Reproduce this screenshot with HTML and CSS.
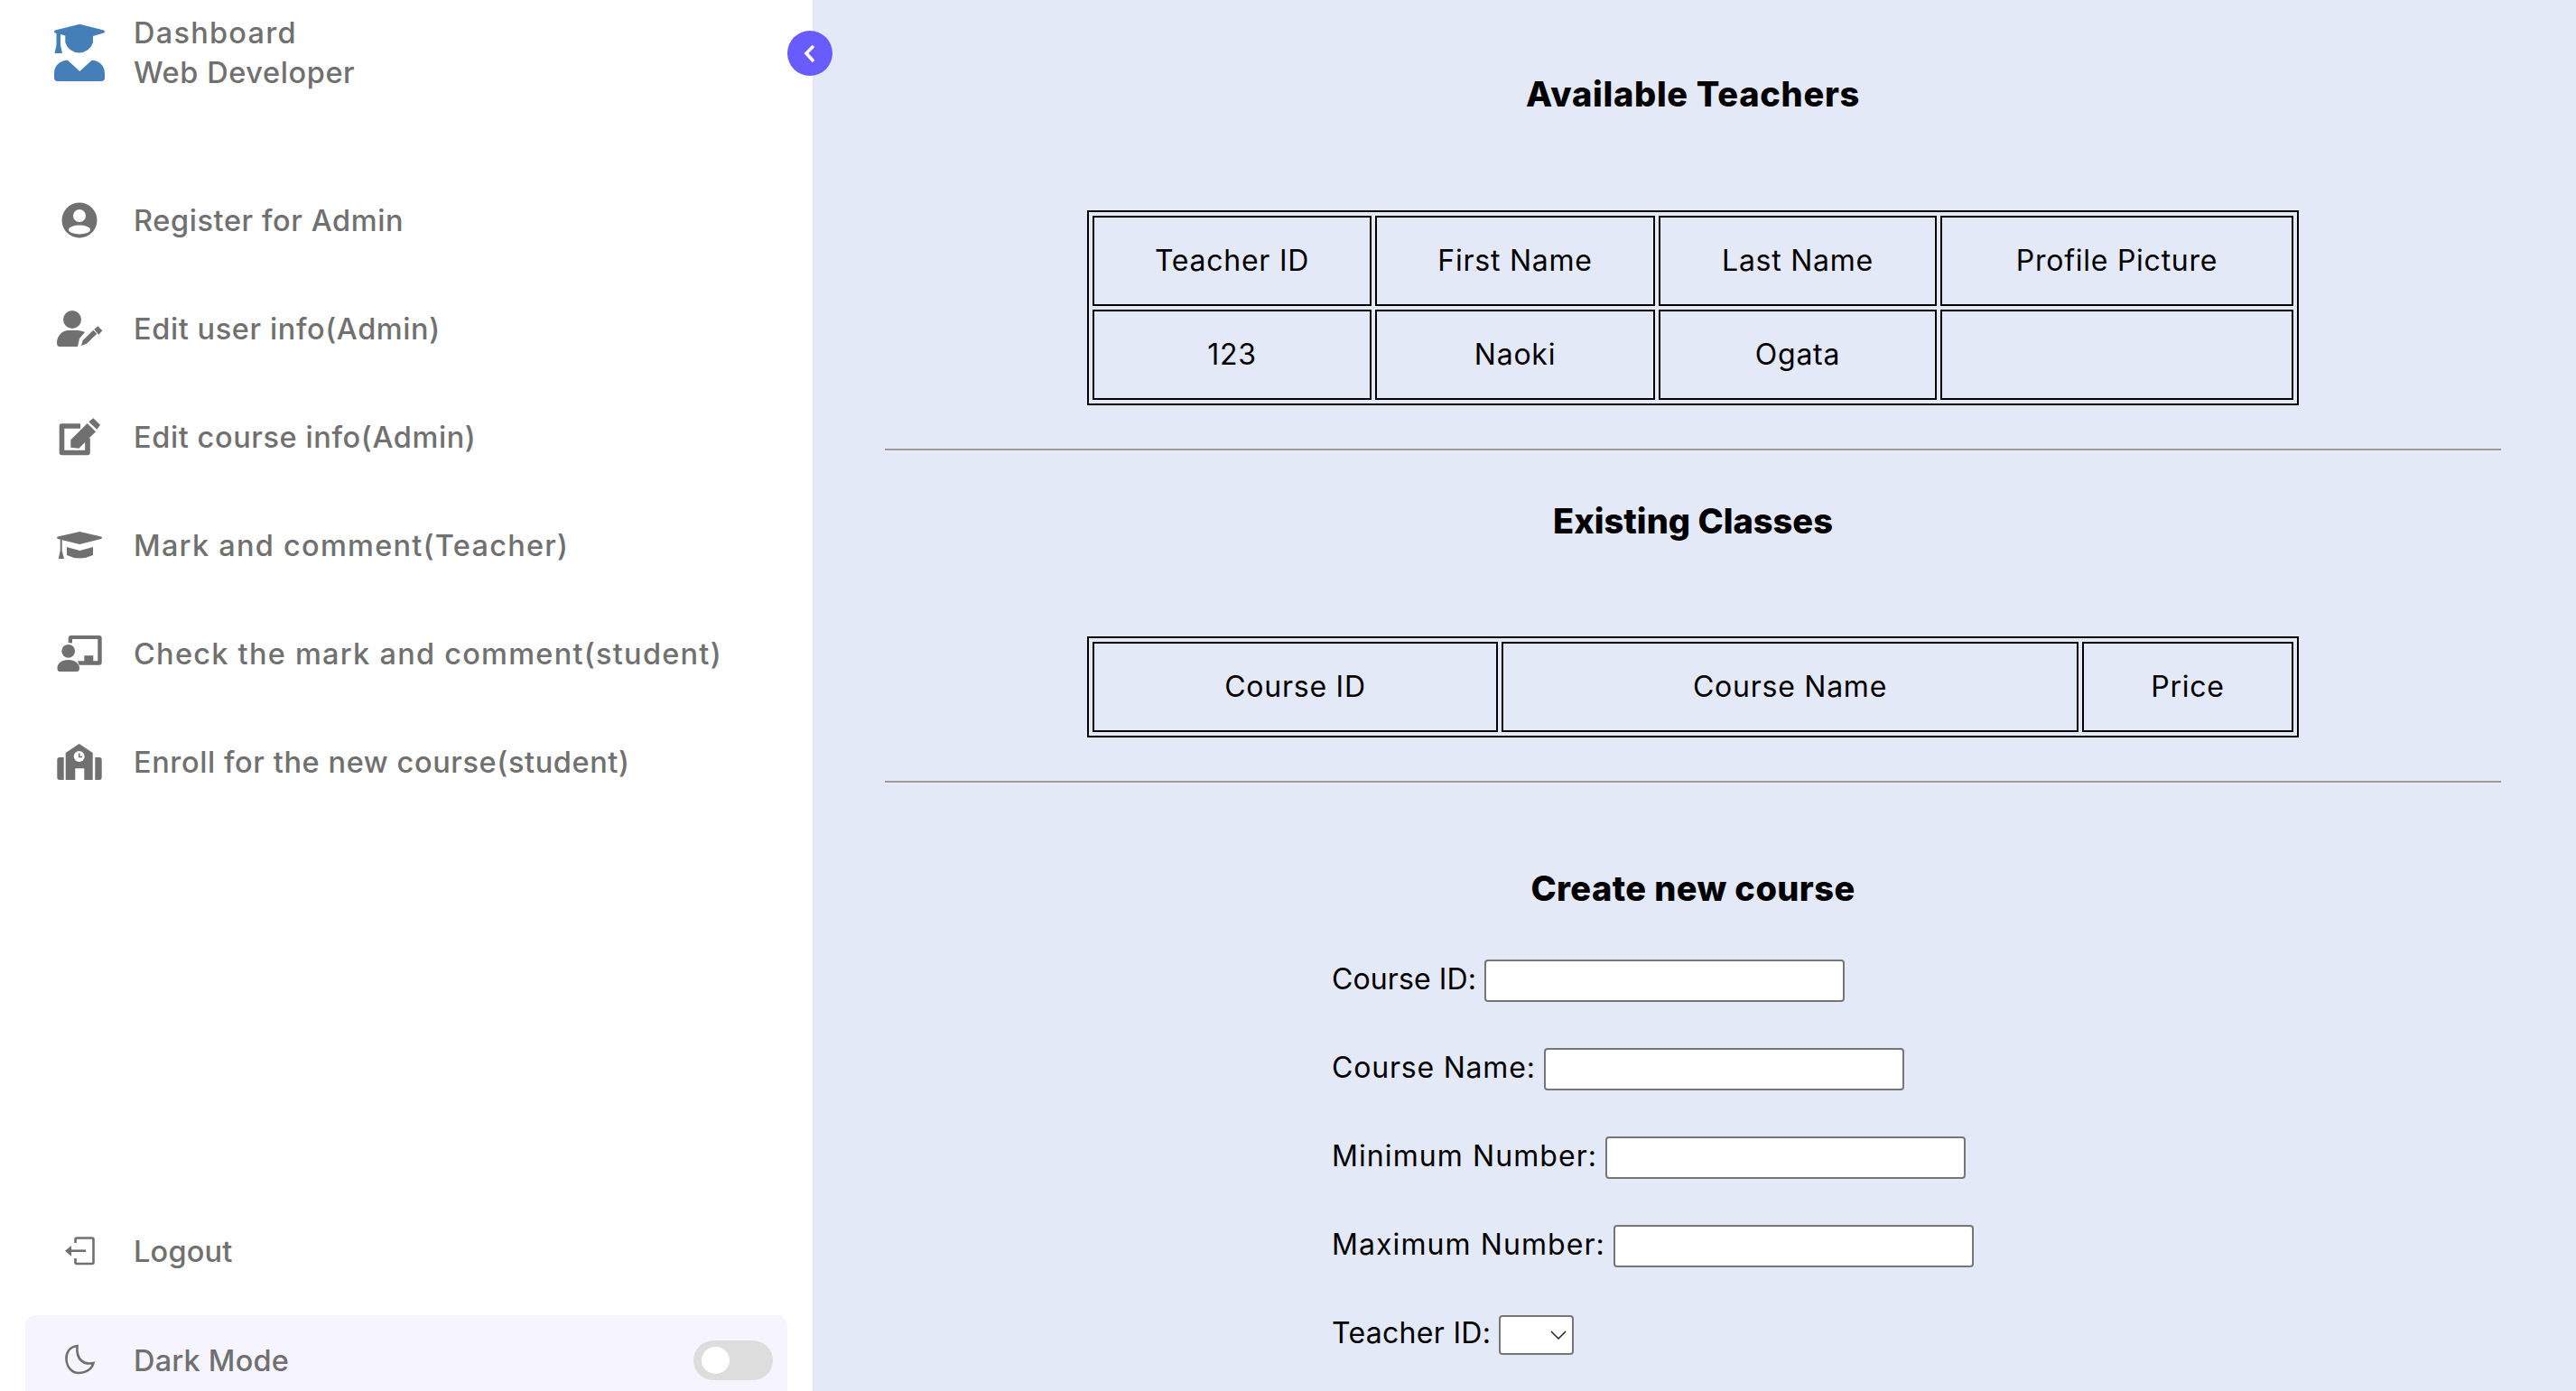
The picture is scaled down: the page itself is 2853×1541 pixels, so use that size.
FILE: index.html
```html
<!DOCTYPE html>
<html lang="en">
<head>
    <meta charset="UTF-8">
    <meta name="viewport" content="width=device-width, initial-scale=1.0">
    <title>Dashboard</title>
    <link rel="stylesheet" href="styles.css">
</head>
<body>
    <nav class="sidebar">
        <header class="sidebar-head">
            <svg class="logo" viewBox="0 0 64 64">
                <path d="M32.3 -.3 L59 6.5 Q61 8 59 9.5 L47 13 V20 A16 16 0 0 1 16.3 20 V12.5 L11 11 V23 L13 32 H4.5 L6.5 23 V10 L5 9.5 Q3 8 5 6.5 Z"/>
                <path d="M4 54 C4 46 10 40 19 39.7 L32.3 52 L45.7 39.7 C54 40 60 46 60 54 V59 Q60 63 56 63 H8 Q4 63 4 59 Z"/>
            </svg>
            <div class="head-text">
                <span class="wide">Dashboard</span>
                <span>Web Developer</span>
            </div>
        </header>

        <button class="toggle" type="button" aria-label="Collapse sidebar">
            <svg viewBox="0 0 50 50"><path d="M29 17 L21 25 L29 34"/></svg>
        </button>

        <ul class="menu-links">
            <li>
                <svg class="icon" viewBox="0 0 64 64">
                    <circle cx="32" cy="32" r="19.5"/>
                    <circle class="cut" cx="32" cy="27" r="7"/>
                    <ellipse class="cut" cx="32" cy="42.5" rx="12" ry="5"/>
                </svg>
                <a href="#">Register for Admin</a>
            </li>
            <li>
                <svg class="icon" viewBox="0 0 64 64">
                    <circle cx="24" cy="22" r="10"/>
                    <path d="M7 48 C7 40 13 34 20 34 H30 C33 34 36 35 38 36 L32 43 L30 52 H10 Q7 52 7 48 Z"/>
                    <path d="M34 51 L35.7 45.3 L47.3 33.7 L51.3 37.7 L40 48.7 Z"/>
                    <path d="M48.3 33 L52.3 29.3 L57.3 34.3 L53.3 38.7 Z"/>
                </svg>
                <a href="#">Edit user info(Admin)</a>
            </li>
            <li>
                <svg class="icon" viewBox="0 0 64 64">
                    <path class="line" d="M33 20 H12.5 V49.5 H41 V33.5"/>
                    <path d="M22.3 43.7 V35.3 L40.7 17 L50 26.3 L31.3 44.7 Z"/>
                    <path d="M42.3 15.3 L47.3 11.3 L55 18.7 L51.3 23.7 Z"/>
                </svg>
                <a href="#">Edit course info(Admin)</a>
            </li>
            <li>
                <svg class="icon" viewBox="0 0 64 64">
                    <path d="M32.3 17 L56 22.5 Q58 23.7 56 25 L32.3 31 L8 25 Q6 23.7 8 22.5 Z"/>
                    <path d="M18 34 L32.3 38 L47 34 V43 Q32 50 18 43 Z"/>
                    <path d="M10.7 26 H12.7 V38 L15 47 H8.7 L10.7 38 Z"/>
                </svg>
                <a class="wide" href="#">Mark and comment(Teacher)</a>
            </li>
            <li>
                <svg class="icon" viewBox="0 0 64 64">
                    <circle cx="19.7" cy="29.3" r="7.4"/>
                    <path d="M7.5 48 C7.5 43 12 39 19.5 39 C27 39 32 43 32 48 Q32 52 29 52 H10 Q7.5 52 7.5 48 Z"/>
                    <path d="M19.7 20 V15 Q19.7 12 22.7 12 H53.7 Q56.7 12 56.7 15 V41.7 Q56.7 44.7 53.7 44.7 H31.7 L30 40.3 H37.3 V34.3 H47.3 V40.3 H52.3 V16 H24 V20.5 Z"/>
                </svg>
                <a class="wide" href="#">Check the mark and comment(student)</a>
            </li>
            <li>
                <svg class="icon" viewBox="0 0 64 64">
                    <path d="M31.7 12 L46.7 22 V52 H37.3 V39.3 H27.3 V52 H16.7 V22 Z"/>
                    <path d="M7.3 30 Q7.3 27 10 27 H14.7 V52 H10 Q7.3 52 7.3 49 Z"/>
                    <path d="M49.3 27 H54 Q56.7 27 56.7 30 V49 Q56.7 52 54 52 H49.3 Z"/>
                    <circle class="cut" cx="31.7" cy="26" r="6"/>
                    <path class="hands" d="M31.7 22.5 V26.5 H35"/>
                </svg>
                <a href="#">Enroll for the new course(student)</a>
            </li>
        </ul>

        <div class="bottom-links">
            <div class="bottom-row">
                <svg class="icon outline" viewBox="0 0 64 64">
                    <path d="M27.5 23 V19 Q27.5 17.5 29 17.5 H46 Q47.5 17.5 47.5 19 V44.5 Q47.5 46 46 46 H29 Q27.5 46 27.5 44.5 V40"/>
                    <path d="M22 31.7 H39"/>
                    <path class="arrow" d="M16 31.7 L23 26 V37.7 Z"/>
                </svg>
                <a class="tight" href="#">Logout</a>
            </div>
            <div class="bottom-row mode">
                <svg class="icon outline" viewBox="0 0 64 64">
                    <path d="M29.5 16 C20 17 17 25 17.5 31 C18 40 24 46 31 46 C40 46 46 41 47.5 35 C38 37 28 33 29.5 16 Z"/>
                </svg>
                <span class="tight">Dark Mode</span>
                <span class="switch"></span>
            </div>
        </div>
    </nav>

    <main class="main">
        <h2 class="first">Available Teachers</h2>
        <table>
            <tr>
                <th class="col-1">Teacher ID</th>
                <th class="col-2">First Name</th>
                <th class="col-3">Last Name</th>
                <th class="col-4">Profile Picture</th>
            </tr>
            <tr>
                <td>123</td>
                <td>Naoki</td>
                <td>Ogata</td>
                <td></td>
            </tr>
        </table>
        <hr>

        <h2>Existing Classes</h2>
        <table>
            <tr>
                <th class="col-id">Course ID</th>
                <th class="col-name">Course Name</th>
                <th class="col-price">Price</th>
            </tr>
        </table>
        <hr>

        <h2 class="create">Create new course</h2>
        <form class="course-form">
            <div class="form-row">
                <label for="course-id">Course ID:</label>
                <input id="course-id" type="text">
            </div>
            <div class="form-row">
                <label class="mid" for="course-name">Course Name:</label>
                <input id="course-name" type="text">
            </div>
            <div class="form-row">
                <label class="wide" for="min-number">Minimum Number:</label>
                <input id="min-number" type="text">
            </div>
            <div class="form-row">
                <label class="wide" for="max-number">Maximum Number:</label>
                <input id="max-number" type="text">
            </div>
            <div class="form-row">
                <label class="short" for="teacher-id">Teacher ID:</label>
                <span class="select-wrap">
                    <select id="teacher-id"></select>
                    <svg class="chevron" viewBox="0 0 18 10"><path d="M1 1 L9 9 L17 1"/></svg>
                </span>
            </div>
        </form>
    </main>
</body>
</html>
```

FILE: styles.css
```css
* {
    box-sizing: border-box;
}

body {
    display: flex;
    height: 100vh;
    margin: 0;
    overflow: hidden;
    background: #e4e9f7;
    font-family: Inter, "Liberation Sans", sans-serif;
    color: #000;
}

/* sidebar */
.sidebar {
    position: relative;
    display: flex;
    flex-direction: column;
    flex: none;
    width: 900px;
    height: calc(100vh + 16px);
    padding: 14px 28px 0;
    background: #fff;
    color: #707070;
    font-size: 32.5px;
    font-weight: 500;
    letter-spacing: .6px;
}

.sidebar a {
    color: inherit;
    text-decoration: none;
}

.sidebar .wide {
    letter-spacing: 1.25px;
}

.sidebar .tight {
    letter-spacing: .2px;
}

.sidebar-head {
    display: flex;
    align-items: center;
    gap: 28px;
    padding-left: 28px;
}

.logo {
    width: 64px;
    height: 64px;
    overflow: visible;
    fill: #447fb8;
}

.head-text {
    display: flex;
    flex-direction: column;
    padding-top: 1px;
    line-height: 44px;
}

.toggle {
    position: absolute;
    top: 34px;
    right: -22px;
    width: 50px;
    height: 50px;
    padding: 0;
    border: 0;
    border-radius: 50%;
    background: #695cfe;
}

.toggle svg {
    display: block;
    fill: none;
    stroke: #fff;
    stroke-width: 3.6;
}

.menu-links {
    flex: 1;
    margin: 81px 0 0;
    padding: 0;
    list-style: none;
}

.menu-links li,
.bottom-row {
    display: flex;
    align-items: center;
    gap: 28px;
    height: 120px;
    padding-left: 28px;
}

.icon {
    flex: none;
    width: 64px;
    height: 64px;
    fill: #707070;
}

.icon .cut {
    fill: #fff;
}

.icon .line {
    fill: none;
    stroke: #707070;
    stroke-width: 5.6;
    stroke-linejoin: round;
}

.icon .hands {
    fill: none;
    stroke: #707070;
    stroke-width: 1.6;
}

.icon.outline {
    fill: none;
    stroke: #707070;
    stroke-width: 2.6;
}

.icon .arrow {
    fill: #707070;
    stroke: none;
}

.bottom-row {
    margin-bottom: 11px;
}

.bottom-row.mode {
    height: 100px;
    margin: 0;
    border-radius: 12px;
    background: #f6f5ff;
}

.bottom-row .switch {
    position: relative;
    width: 88px;
    height: 44px;
    margin-left: auto;
    margin-right: 16px;
    border-radius: 22px;
    background: #ddd;
}

.switch::before {
    content: "";
    position: absolute;
    top: 7px;
    left: 9px;
    width: 31px;
    height: 30px;
    border-radius: 50%;
    background: #fff;
}

/* main content */
.main {
    flex: 1;
    padding: 0 83px 0 80px;
    font-size: 32px;
    letter-spacing: .75px;
}

h2 {
    margin: 53px 0 104px;
    font-size: 38px;
    font-weight: 800;
    line-height: 48px;
    letter-spacing: 0;
    text-align: center;
}

h2.first {
    margin-top: 80px;
    margin-bottom: 105px;
    letter-spacing: .7px;
}

h2.create {
    margin: 92px 0 55px;
    letter-spacing: .4px;
}

table {
    width: 1342px;
    margin: 0 auto 48px;
    border: 2px solid #000;
    border-spacing: 4px;
    table-layout: fixed;
}

th,
td {
    height: 100px;
    padding: 0 0 2px;
    border: 2px solid #000;
    font-weight: 400;
    text-align: center;
}

.col-1 { width: 309px; }
.col-2 { width: 310px; }
.col-3 { width: 308px; }
.col-4 { width: 391px; }
.col-id { width: 449px; }
.col-name { width: 639px; }
.col-price { width: 234px; }

hr {
    height: 3px;
    margin: 0;
    border: 0;
    border-top: 2px solid #9a9a9a;
    border-bottom: 1px solid #eee;
}

.course-form {
    width: 800px;
    margin: 0 auto;
    letter-spacing: .1px;
}

.course-form .mid {
    letter-spacing: .8px;
}

.course-form .wide {
    letter-spacing: 1.08px;
}

.course-form .short {
    letter-spacing: .3px;
}

.form-row {
    display: flex;
    align-items: center;
    gap: 9px;
    height: 47px;
    margin-bottom: 51px;
}

label {
    padding-bottom: 4px;
}

input {
    width: 399px;
    height: 47px;
    border: 2px solid #767676;
    border-radius: 4px;
    background: #fff;
}

.select-wrap {
    position: relative;
    display: block;
    height: 44px;
}

select {
    display: block;
    width: 83px;
    height: 44px;
    border: 2px solid #767676;
    border-radius: 4px;
    background: #fff;
    appearance: none;
}

.chevron {
    position: absolute;
    top: 17px;
    left: 57px;
    width: 18px;
    height: 10px;
    fill: none;
    stroke: #222;
    stroke-width: 1.5;
    pointer-events: none;
}
```
